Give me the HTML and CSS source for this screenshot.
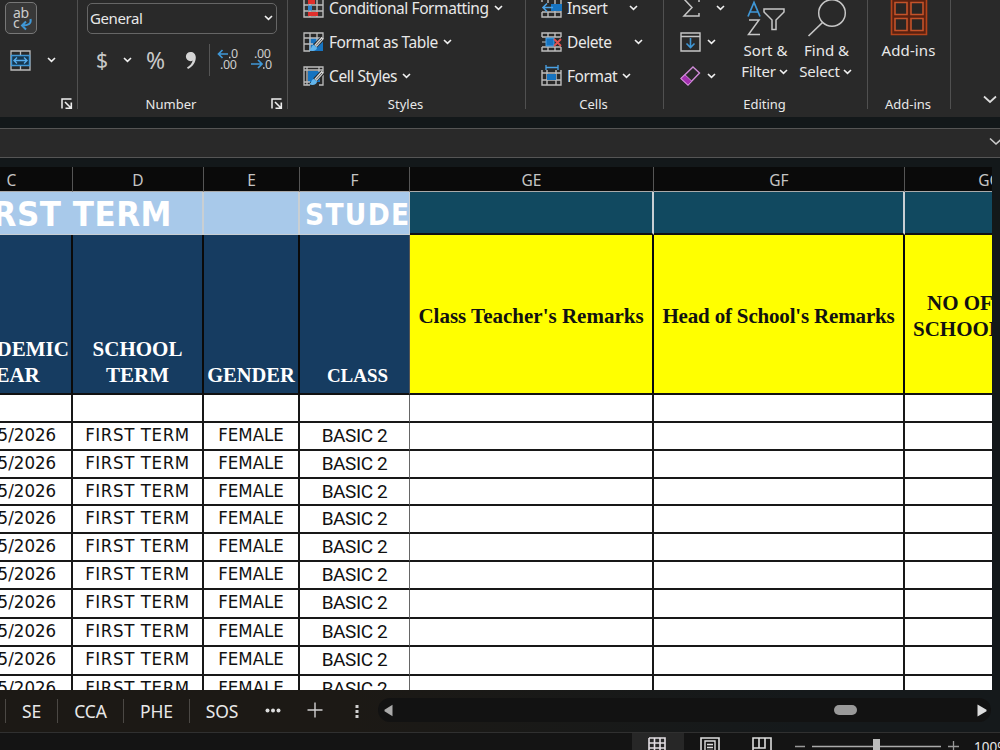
FILE: index.html
```html
<!DOCTYPE html>
<html lang="en">
<head>
<meta charset="utf-8">
<title>Workbook</title>
<link rel="stylesheet" href="styles.css">
</head>
<body>
<svg width="0" height="0" class="defs">
  <symbol id="chev" viewBox="0 0 9 6"><path d="M1 1l3.500 3.400L8 1" fill="none" stroke="#f0f0f0" stroke-width="1.600"/></symbol>
  <symbol id="launch" viewBox="0 0 12 12"><path d="M1 10.500V1h9.500" fill="none" stroke="#eee" stroke-width="1.500"/><path d="M4 4l6 6M10.300 4.500v5.800H4.500" fill="none" stroke="#eee" stroke-width="1.600"/></symbol>
  <symbol id="brush" viewBox="0 0 16 15"><path d="M15 1L7 9" stroke="#292929" stroke-width="5"/><path d="M14.800.8L7.500 9" stroke="#d6d6d6" stroke-width="3.200"/><path d="M14 2L8 8.500" stroke="#555" stroke-width="1"/><path d="M6 8c-3 0-2 4-5 5 3 2 8 1 8-2.500z" fill="#62b5ec"/></symbol>
</svg>
<header class="ribbon">
  <section class="group tall align">
    <div class="row"><div class="wrap"><svg width="25" height="27" viewBox="0 0 25 27"><text x="4" y="12.500" class="abc">ab</text><text x="4" y="23" class="abc">c</text><path d="M21.500 14c1 4.500-2 6.500-8 6.500M17 16.500l-4 4 4 4" fill="none" stroke="#3f97d6" stroke-width="2"/></svg></div></div>
    <div class="row"><svg class="merge" width="22" height="21" viewBox="0 0 22 21"><path d="M1 1h19v19H1zM10.500 1v4M10.500 16v4" fill="none" stroke="#bbb" stroke-width="1.300"/><path d="M1.500 5.500h18v10h-18z" fill="#17374f" stroke="#3f97d6" stroke-width="1.400"/><path d="M4 10.500h13M7 7.500l-3 3 3 3M14 7.500l3 3-3 3" fill="none" stroke="#57aceb" stroke-width="1.400"/></svg><svg class="chev"><use href="#chev"/></svg></div>
    <div class="label"><svg class="launch"><use href="#launch"/></svg></div>
  </section>
  <section class="group tall number">
    <div class="row"><div class="combo"><span>General</span><svg class="chev"><use href="#chev"/></svg></div></div>
    <div class="row tools"><div class="dollar">$</div><svg class="chev"><use href="#chev"/></svg><div class="pct">%</div>
      <svg class="comma" width="12" height="19" viewBox="0 0 12 19"><path d="M5.500 1a4.600 4.600 0 0 0 0 9.200c.8 0 1.600-.2 2.200-.6C7 12.500 5 15 2 16.500l1 1.500c5-2.500 7.800-7 7.800-11.500C10.800 3 8.500 1 5.500 1z" fill="#d4d4d4"/></svg>
      <i class="vline"></i>
      <svg class="dec" width="23" height="24" viewBox="0 0 23 24"><text x="14" y="10" class="zero">0</text><text x="3" y="21" class="zero">.00</text><path d="M11 6H1.500M5.500 2l-4 4 4 4" fill="none" stroke="#3f97d6" stroke-width="1.700"/><path d="M12 9.500h1.500" stroke="#ccc" stroke-width="1.500"/></svg>
      <svg class="inc" width="23" height="24" viewBox="0 0 23 24"><text x="3" y="10" class="zero">.00</text><text x="14" y="21" class="zero">0</text><path d="M0 16h11M7 12l4 4-4 4" fill="none" stroke="#3f97d6" stroke-width="1.700"/><path d="M12 20h1.500" stroke="#ccc" stroke-width="1.500"/></svg>
    </div>
    <div class="label"><span>Number</span><svg class="launch"><use href="#launch"/></svg></div>
  </section>
  <section class="group styles">
    <div class="row"><svg width="22" height="20" viewBox="0 0 22 20"><path d="M1 1h19v18H1zM1 7h19M1 13h19M7 1v18M14 1v18" fill="#333" stroke="#bdbdbd" stroke-width="1.400"/><path d="M5 1h7v5H5zM5 14h10v4H5z" fill="#e0302d"/><path d="M5 7.500h4v5H5z" fill="#2e86d0"/></svg><span class="t1">Conditional Formatting</span><svg class="chev"><use href="#chev"/></svg></div>
    <div class="row"><svg width="22" height="20" viewBox="0 0 22 20"><path d="M6 6h14v13H6z" fill="#1673c0"/><path d="M7 19H1V1h19v7M1 6h19M1 12h9M7 1v18M14 1v10" fill="none" stroke="#bdbdbd" stroke-width="1.300"/><use href="#brush" x="5" y="5" width="16" height="15"/></svg><span class="t2">Format as Table</span><svg class="chev"><use href="#chev"/></svg></div>
    <div class="row"><svg width="22" height="20" viewBox="0 0 22 20"><path d="M5 5h12v11H5z" fill="#1673c0"/><path d="M7 19H1V1h19v18h-4M1 4h19M4 1v18M16 1v5M1 16h6" fill="none" stroke="#bdbdbd" stroke-width="1.300"/><use href="#brush" x="5" y="5" width="16" height="15"/></svg><span class="t3">Cell Styles</span><svg class="chev"><use href="#chev"/></svg></div>
    <div class="label"><span>Styles</span></div>
  </section>
  <section class="group cells">
    <div class="row"><svg width="22" height="20" viewBox="0 0 22 20"><path d="M1 4V1h19v18H1v-5M7 1v4M14 1v18M1 14h19M7 14v5" fill="none" stroke="#bdbdbd" stroke-width="1.400"/><path d="M10 6h11v7H10z" fill="#1673c0"/><path d="M12 9.500H2M6 5.500l-4 4 4 4" fill="none" stroke="#4ba3e6" stroke-width="1.600"/></svg><span class="t4">Insert</span><svg class="chev"><use href="#chev"/></svg></div>
    <div class="row"><svg width="22" height="20" viewBox="0 0 22 20"><path d="M1 5V1h19v4M1 15v4h19v-4M1 5h19M1 15h19M7 1v4M14 1v4M7 15v4M14 15v4" fill="none" stroke="#bdbdbd" stroke-width="1.400"/><path d="M1 10h4" stroke="#bdbdbd"/><path d="M5 6h8v8H5z" fill="#1673c0" stroke="#4ba3e6"/><path d="M13 7l7 7M20 7l-7 7" stroke="#e05252" stroke-width="1.800"/></svg><span class="t5">Delete</span><svg class="chev"><use href="#chev"/></svg></div>
    <div class="row"><svg width="22" height="22" viewBox="0 0 22 22"><path d="M1 5v15h19V5M1 8h19M1 15h19M6 5v15M15 5v15" fill="none" stroke="#bdbdbd" stroke-width="1.400"/><path d="M6 9h9v6H6z" fill="#1673c0"/><path d="M5 2.500h12M5 0v5M17 0v5" fill="none" stroke="#4ba3e6" stroke-width="1.300"/></svg><span class="t6">Format</span><svg class="chev"><use href="#chev"/></svg></div>
    <div class="label"><span>Cells</span></div>
  </section>
  <section class="group editing">
    <div class="small">
      <div class="row"><svg width="22" height="20" viewBox="0 0 22 20"><path d="M19 4V1H4l8 8.500L4 18h15v-3" fill="none" stroke="#c6c6c6" stroke-width="1.500"/></svg><svg class="chev"><use href="#chev"/></svg></div>
      <div class="row"><svg width="22" height="20" viewBox="0 0 22 20"><path d="M1 1h19v18H1zM1 4.500h19" fill="none" stroke="#c6c6c6" stroke-width="1.400"/><path d="M10.500 6v9M6.500 11.500l4 4 4-4" fill="none" stroke="#3f97d6" stroke-width="1.600"/></svg><svg class="chev"><use href="#chev"/></svg></div>
      <div class="row"><svg width="22" height="21" viewBox="0 0 22 21"><path d="M1 12.500L13 1l6.500 6L8 19z" fill="none" stroke="#d08bd8" stroke-width="1.400"/><path d="M1 12.500L5 8.800l6.800 6.400L8 19z" fill="#a32fb0" stroke="#d08bd8"/></svg><svg class="chev"><use href="#chev"/></svg></div>
    </div>
    <div class="big sort"><svg width="40" height="35" viewBox="0 0 40 35"><path d="M2 15L8 1l6 14M4 10.500h8" fill="none" stroke="#3f97d6" stroke-width="1.700"/><path d="M3 18.500h10L2.500 33H14" fill="none" stroke="#c6c6c6" stroke-width="1.500"/><path d="M18 7.500h20v3l-8 8V28h-4v-9.500l-8-8z" fill="none" stroke="#c6c6c6" stroke-width="1.500"/></svg><span class="b1">Sort &amp;</span><span class="b2">Filter <svg class="chev"><use href="#chev"/></svg></span></div>
    <div class="big find"><svg width="40" height="38" viewBox="0 0 40 38"><circle cx="25" cy="13" r="13.300" fill="none" stroke="#c6c6c6" stroke-width="1.500"/><path d="M15.500 22.500L1.500 36" stroke="#c6c6c6" stroke-width="1.700"/></svg><span class="b1">Find &amp;</span><span class="b2">Select <svg class="chev"><use href="#chev"/></svg></span></div>
    <div class="label"><span>Editing</span></div>
  </section>
  <section class="group addins">
    <div class="big"><svg width="38" height="38" viewBox="0 0 38 38"><path d="M1.500-2h35v36.500h-35z" fill="#5a2110" stroke="#b5441b" stroke-width="1.600"/><path d="M5 2.500h12v12H5zM21 2.500h12v12H21zM5 18.500h12v12H5zM21 18.500h12v12H21z" fill="#292624" stroke="#c4532a" stroke-width="1.600"/></svg><span class="b1">Add-ins</span></div>
    <div class="label"><span>Add-ins</span></div>
  </section>
  <svg class="collapse" width="14" height="9" viewBox="0 0 14 9"><path d="M1 1.500l6 5.500 6-5.500" fill="none" stroke="#ddd" stroke-width="1.700"/></svg>
</header>
<div class="formula"><svg width="14" height="9" viewBox="0 0 14 9"><path d="M1 1.500l6 5.500 6-5.500" fill="none" stroke="#ccc" stroke-width="1.600"/></svg></div>
<main class="sheet">
  <div class="line letters"><b class="c">C</b><b>D</b><b>E</b><b>F</b><b>GE</b><b>GF</b><b class="c">GG</b></div>
  <div class="line title"><span class="pale first">FIRST TERM</span><span class="pale"></span><span class="pale stude">STUDE</span><span class="teal"></span><span class="teal"></span><span class="teal"></span></div>
  <div class="line heads"><span>ACADEMIC<br>YEAR</span><span>SCHOOL<br>TERM</span><span class="gender">GENDER</span><span class="class">CLASS</span><span class="yellow">Class Teacher's Remarks</span><span class="yellow tight">Head of School's Remarks</span><span class="yellow days"><em>NO OF</em><em>SCHOOL</em></span></div>
  <div class="line data blank"><span></span><span></span><span></span><span></span><span></span><span></span><span></span></div>
  <div class="line data"><span>2025/2026</span><span>FIRST TERM</span><span>FEMALE</span><span>BASIC 2</span><span></span><span></span><span></span></div>
  <div class="line data"><span>2025/2026</span><span>FIRST TERM</span><span>FEMALE</span><span>BASIC 2</span><span></span><span></span><span></span></div>
  <div class="line data short"><span>2025/2026</span><span>FIRST TERM</span><span>FEMALE</span><span>BASIC 2</span><span></span><span></span><span></span></div>
  <div class="line data"><span>2025/2026</span><span>FIRST TERM</span><span>FEMALE</span><span>BASIC 2</span><span></span><span></span><span></span></div>
  <div class="line data"><span>2025/2026</span><span>FIRST TERM</span><span>FEMALE</span><span>BASIC 2</span><span></span><span></span><span></span></div>
  <div class="line data"><span>2025/2026</span><span>FIRST TERM</span><span>FEMALE</span><span>BASIC 2</span><span></span><span></span><span></span></div>
  <div class="line data high"><span>2025/2026</span><span>FIRST TERM</span><span>FEMALE</span><span>BASIC 2</span><span></span><span></span><span></span></div>
  <div class="line data"><span>2025/2026</span><span>FIRST TERM</span><span>FEMALE</span><span>BASIC 2</span><span></span><span></span><span></span></div>
  <div class="line data high"><span>2025/2026</span><span>FIRST TERM</span><span>FEMALE</span><span>BASIC 2</span><span></span><span></span><span></span></div>
  <div class="line data"><span>2025/2026</span><span>FIRST TERM</span><span>FEMALE</span><span>BASIC 2</span><span></span><span></span><span></span></div>
</main>
<nav class="tabs">
  <span class="tab se">SE</span><span class="tab cca">CCA</span><span class="tab phe">PHE</span><span class="tab sos">SOS</span>
  <svg class="more" width="16" height="5" viewBox="0 0 16 5"><g fill="#ddd"><circle cx="2.500" cy="2.500" r="2"/><circle cx="8" cy="2.500" r="2"/><circle cx="13.500" cy="2.500" r="2"/></g></svg>
  <svg class="add" width="16" height="16" viewBox="0 0 16 16"><path d="M8 .5v15M.5 8h15" stroke="#d0d0d0" stroke-width="1.400"/></svg>
  <svg class="dots" width="4" height="15" viewBox="0 0 4 15"><path d="M.5 1h3v3h-3zM.5 6h3v3h-3zM.5 11h3v3h-3z" fill="#d0d0d0"/></svg>
  <div class="scroll"><svg width="9" height="13" viewBox="0 0 9 13"><path d="M8.500.8v11.400L.5 7.300v-1.600z" fill="#aaa"/></svg><i></i><svg width="10" height="13" viewBox="0 0 10 13"><path d="M.5.5v12l9-5.200V5.700z" fill="#ddd"/></svg></div>
</nav>
<footer class="status">
  <div class="view"><svg width="18" height="18" viewBox="0 0 18 18"><path d="M1 1h16v17M1 1v17M6.500 1v17M12 1v17M1 6h16M1 11h16M1 16h16" fill="none" stroke="#e4dfe4" stroke-width="1.600"/></svg></div>
  <svg class="page" width="20" height="18" viewBox="0 0 20 18"><path d="M1 18V1h18v17" fill="none" stroke="#ddd" stroke-width="1.600"/><path d="M5 18V4h10v14M7 7.500h6M7 10.500h6M7 13.500h6" fill="none" stroke="#ddd" stroke-width="1.400"/></svg>
  <svg class="break" width="20" height="18" viewBox="0 0 20 18"><path d="M1 18V1h18v17M1 11h12V1M7 1v10" fill="none" stroke="#ddd" stroke-width="1.600"/></svg>
  <svg class="zoom" width="166" height="18" viewBox="0 0 166 18"><path d="M1 9.500h10M154 9.500h11M159.500 4v11" stroke="#999" stroke-width="1.300"/><path d="M18 9.500h129" stroke="#aaa" stroke-width="1.500"/><path d="M79 2h7v16h-7z" fill="#bbb"/></svg>
  <span>100%</span>
</footer>
</body>
</html>
```
FILE: styles.css
```css
* { box-sizing: border-box; }
body { margin: 0; width: 1000px; height: 750px; overflow: hidden; background: #13181a; font-family: "Noto Sans", sans-serif; color: #e8e8e8; }
svg { flex: none; display: block; }
.defs { position: absolute; }
.chev { width: 9px; height: 6px; }
.launch { width: 12px; height: 12px; }

.ribbon { height: 117px; background: #292929; display: flex; overflow: hidden; font-size: 15.5px; white-space: nowrap; }
.group { flex: none; height: 124px; margin-top: -9px; display: grid; grid-template-rows: 34px 34px 34px 22px; background: linear-gradient(#505050, #505050) right top / 1px 118px no-repeat; }
.group.tall { height: 115px; margin-top: 0; grid-template-rows: 36px 48px 9px 22px; background-size: 1px 109px; }
.row { display: flex; align-items: center; letter-spacing: -.42px; }
.label { display: flex; align-items: center; justify-content: center; font-size: 13px; position: relative; padding-right: 3px; }
.tall .label { grid-row: 4; }
.label .launch { position: absolute; right: 5px; top: 5px; }
.align { width: 78px; }
.align .chev { margin-left: -1px; }
.wrap { width: 32px; height: 32px; margin-left: 5px; border: 1px solid #777; border-radius: 5px; background: #383838; padding: 2px 3px; }
.abc { font: 14px "Noto Sans", sans-serif; fill: #ccc; }
.merge { margin: 0 16px 0 10px; }
.number { width: 210px; }
.number .label { padding-right: 24px; }
.combo { width: 190px; height: 31px; margin-left: 9px; border: 1px solid #666; border-radius: 5px; display: flex; align-items: center; justify-content: space-between; padding: 0 3px 0 2px; font-size: 15px; }
.tools { color: #c8c8c8; }
.dollar { font-size: 21px; margin-left: 18px; width: 27px; }
.pct { font-size: 23px; margin-left: 14px; width: 20px; letter-spacing: -1px; }
.comma { margin-left: 19px; }
.vline { width: 1px; height: 32px; background: #555; margin-left: 12px; }
.dec { margin-left: 7px; }
.inc { margin-left: 11px; }
.zero { font: 12.5px "Noto Sans", sans-serif; fill: #ccc; }
.styles { width: 238px; }
.styles .row { padding-left: 15px; }
.row span { margin: 0 5px 0 4px; }
.row .combo span { margin: 0; }
.cells { width: 138px; }
.cells .row { padding-left: 15px; }
.cells .t4 { margin-right: 22px; }
.cells .t5 { margin-right: 22px; }
.cells .t6 { margin-right: 5px; }
.editing { width: 204px; grid-template-columns: 71px 61px 61px 11px; }
.editing .small { grid-row: 1 / 4; display: grid; grid-template-rows: 34px 34px 34px; padding-left: 16px; }
.small svg + svg { margin-left: 5px; }
.small .row:first-child svg + svg { margin-left: 14px; }
.editing .label { grid-row: 4; grid-column: 1 / 5; }
.big { grid-row: 1 / 4; padding-top: 9px; display: flex; flex-direction: column; align-items: center; font-size: 15px; }
.big > svg { margin-bottom: 2px; height: 38px; }
.big span { height: 21px; line-height: 21px; display: flex; align-items: center; gap: 4px; }
.big .b2 { gap: 3px; letter-spacing: -.2px; margin-right: 2px; }
.addins { width: 83px; }
.addins .b1 { letter-spacing: .1px; margin-right: 2px; }
.addins .big > svg { margin-right: 2px; }
.collapse { margin: 95px 0 0 32px; }

.formula { height: 30px; margin: 11px 0 9px; background: #292929; border: 1px solid #555; border-width: 1px 0; display: flex; align-items: center; justify-content: flex-end; overflow: hidden; }
.formula svg { margin-right: -3px; margin-top: -3px; }

.sheet { height: 523px; width: 992px; overflow: hidden; }
.line { margin-left: -51px; width: 1211px; display: grid; grid-template-columns: 124px 131px 96px 110px 244px 251px 168px; }
.line > * { overflow: hidden; white-space: nowrap; display: flex; justify-content: center; text-align: center; }
.letters { height: 25px; background: #0a0a0a; }
.letters b { font-weight: 400; font-size: 15.5px; line-height: 27px; color: #c4c4c4; border-right: 1px solid #555; border-bottom: 1px solid #aaa; }
.letters .c { padding-left: 2px; }
.title { height: 43px; font: bold 34.5px/45px "DejaVu Sans Condensed", "DejaVu Sans", sans-serif; letter-spacing: .5px; color: #fff; }
.title > * { border-right: 2px solid #c9cfd3; }
.pale { background: #a8c9ea; border-bottom: 1px solid #c9cfd3; }
.teal { background: #114960; border-bottom: 2px solid #111; }
.title .first { grid-column: 1 / 3; justify-content: flex-end; padding-right: 30px; }
.title .stude { justify-content: flex-start; padding-left: 5px; border-right-width: 1px; font-size: 29.5px; line-height: 46px; letter-spacing: 1.3px; }
.heads { height: 160px; font: bold 21px/26px "Liberation Serif", serif; color: #fff; }
.heads > * { background: #163c61; border-right: 2px solid #0a0a0a; border-bottom: 2px solid #111; align-items: flex-end; padding-bottom: 5px; }
.heads .gender { font-size: 20.5px; }
.heads .class { font-size: 19px; padding: 0 0 4px 6px; border-right: 1px solid #555; }
.heads .yellow { background: #ff0; color: #111; align-items: center; padding: 3px 0 0; }
.heads .tight { letter-spacing: -.17px; }
.heads .days { flex-direction: column; justify-content: center; align-items: flex-start; padding: 4px 0 0 8px; }
.days em { font-style: normal; }
.days em:first-child { padding-left: 14px; }
.data { height: 28px; font: 18.5px/24px "DejaVu Sans Condensed", "DejaVu Sans", sans-serif; color: #111; }
.data.short { height: 27px; }
.data.high { height: 29px; }
.data > * { background: #fff; border-right: 2px solid #181818; border-bottom: 2px solid #181818; }
.data > :first-child { padding-left: 2px; }
.data > :nth-child(2) { letter-spacing: .6px; }
.data > :nth-child(4) { border-right: 1px solid #666; font: 19px/26px Roboto, sans-serif; letter-spacing: -.4px; }

.tabs { height: 42px; background: linear-gradient(90deg, #1c1915 35%, #15191b 80%); display: flex; align-items: center; font-size: 17.5px; letter-spacing: -.1px; }
.tab { height: 24px; line-height: 25px; border-left: 1px solid #4b4844; text-align: center; }
.se { width: 52px; margin-left: 5px; }
.cca { width: 66px; }
.phe { width: 66px; }
.sos { width: 65px; }
.more { margin-left: 11px; margin-top: -2px; }
.add { margin-left: 26px; margin-top: -2px; }
.dots { margin-left: 32px; margin-top: 1px; }
.scroll { margin-left: 19px; width: 613px; height: 24px; border-radius: 12px; background: #121212; display: flex; align-items: center; padding-left: 6px; margin-top: -2px; }
.scroll i { width: 23px; height: 10px; border-radius: 5px; background: #999; margin: 0 120px 0 441px; }

.status { height: 18px; border-top: 1px solid #303030; background: #141414; display: flex; overflow: hidden; font-size: 13.5px; }
.view { width: 52px; margin-left: 632px; background: #272727; padding: 4px 16px; }
.page { margin: 4px 0 0 16px; }
.break { margin: 4px 0 0 32px; }
.zoom { margin: 4px 0 0 22px; }
.view, .page, .break, .zoom { flex: none; }
.status span { margin: 5px 0 0 14px; line-height: 18px; }
```
